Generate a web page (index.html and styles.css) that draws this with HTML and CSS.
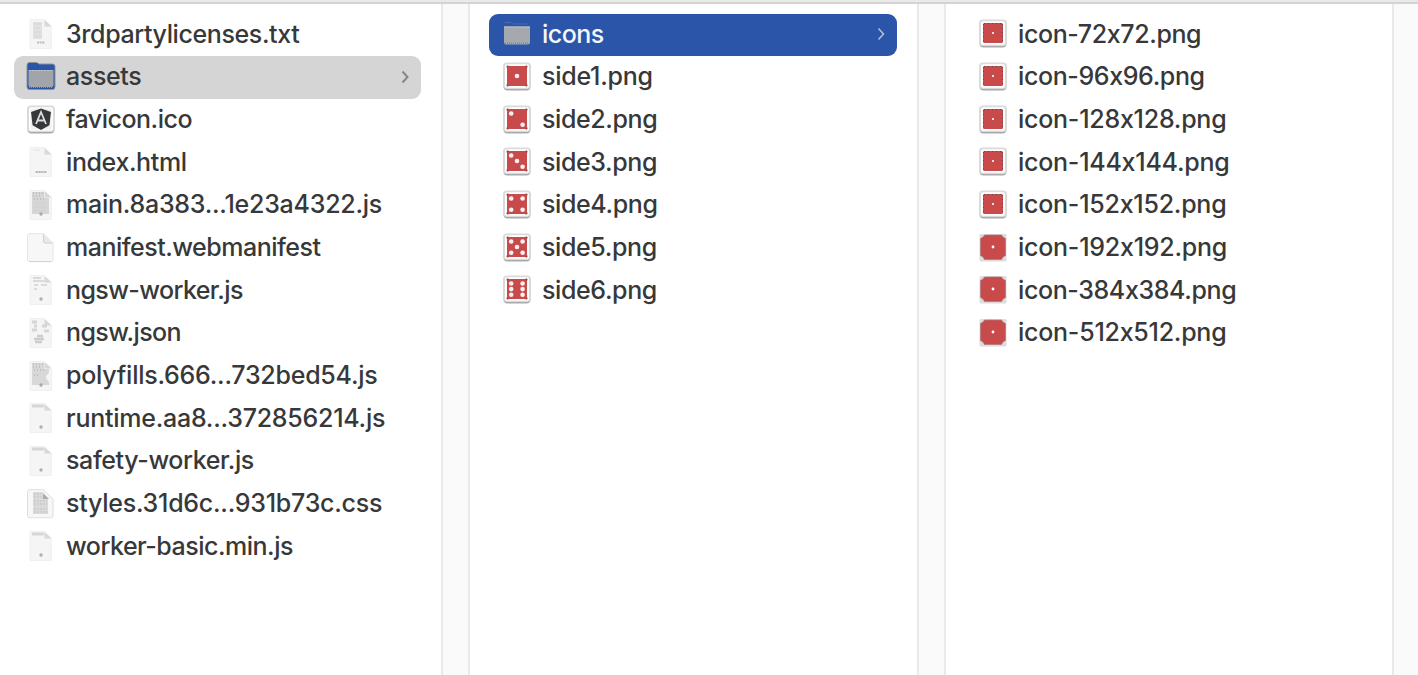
FILE: index.html
```
<!DOCTYPE html>
<html lang="en">
<head>
<meta charset="utf-8">
<title>Files</title>
<link rel="stylesheet" href="styles.css">
</head>
<body>
<svg class="sprite" aria-hidden="true">
  <symbol id="page" viewBox="0 0 30 30">
    <path d="M4 .5h14.500l7 7v22h-21.500z" fill="#f5f5f5" stroke="#f0f0f0"/>
    <path d="M18.500 1v6.500h7z" fill="#d8d8d8"/>
  </symbol>
  <symbol id="doc-txt" viewBox="0 0 30 30">
    <use href="#page"/><path d="M7 3h9v17H7z" fill="#e1e1e1"/><path d="M8 5h7M9 9h5M8 13h7M8 17h7" stroke="#d6d6d6"/><path d="M11 23.500h8" stroke="#bdbdbd" stroke-width="2" stroke-dasharray="2 .6"/>
  </symbol>
  <symbol id="doc-html" viewBox="0 0 30 30">
    <use href="#page"/><path d="M7 3h7" stroke="#e2e2e2"/><path d="M9.500 25h11" stroke="#b8b8b8" stroke-width="2" stroke-dasharray="2.300 .6"/>
  </symbol>
  <symbol id="doc-code" viewBox="0 0 30 30">
    <use href="#page"/><path d="M6 2h12v6h5v16H6z" fill="#d6d6d6"/><path d="M7 3h10M7 6h9M8 9h10" stroke="#aaa" stroke-dasharray="1 2"/><path d="M8 13h12M8 17h12M8 21h12" stroke="#cfcfcf"/><circle cx="15" cy="24" r="1.700" fill="#a8a9ad"/>
  </symbol>
  <symbol id="doc-poly" viewBox="0 0 30 30">
    <use href="#page"/><path d="M6 2h12v6h5v4l-3 3v2l3 4v3H6z" fill="#d8d8d8"/><path d="M7 3h10M7 6h9M8 9h10M8 14h6" stroke="#aaa" stroke-dasharray="1 2"/><circle cx="15" cy="24" r="1.700" fill="#a8a9ad"/>
  </symbol>
  <symbol id="doc-worker" viewBox="0 0 30 30">
    <use href="#page"/><path d="M7 3h8M7 6h11M8 10h4M15 10h6M8 14h3" stroke="#dadada" stroke-width="2"/><circle cx="15" cy="24" r="1.700" fill="#b0b0b3"/>
  </symbol>
  <symbol id="doc-json" viewBox="0 0 30 30">
    <use href="#page"/><path d="M6 4h5M8 8h3M16 8h5M6 12h5M18 13h5" stroke="#d6d6d6" stroke-width="3"/><path d="M8 21h10M11 18h6M9 24h7" stroke="#cdcdcd" stroke-width="2.500"/>
  </symbol>
  <symbol id="doc-js" viewBox="0 0 30 30">
    <use href="#page"/><path d="M6 3h12" stroke="#d6d6d6" stroke-width="3"/><circle cx="15" cy="24" r="1.700" fill="#b0b0b3"/>
  </symbol>
  <symbol id="doc-blank" viewBox="0 0 30 30">
    <path d="M4 .7h13.500l9.500 9.500v16q0 2.500-2.500 2.500H4q-2.500 0-2.500-2.500v-23Q1.500.7 4 .7z" fill="#f7f7f7" stroke="#e4e4e4"/>
    <path d="M17.500 1v7q0 2 2 2h7" fill="#e9e9e9" stroke="#cfcfcf"/><path d="M3 28.500h22" stroke="#d3d3d3"/>
  </symbol>
  <symbol id="doc-css" viewBox="0 0 30 30">
    <path d="M4 .7h13.500l9.500 9.500v16q0 2.500-2.500 2.500H4q-2.500 0-2.500-2.500v-23Q1.500.7 4 .7z" fill="#f7f7f7" stroke="#dedede"/>
    <path d="M7 3h10v7h5v15H7z" fill="#dadada"/><path d="M8 5h7M8 8h8M8 12h13M8 15h13M8 20h13M8 23h13" stroke="#c3c3c3" stroke-dasharray="2 1"/><path d="M17 4v6h6z" fill="#aaabae"/>
  </symbol>
  <symbol id="folder-blue" viewBox="0 0 30 30">
    <path d="M1 3q0-2.500 2.500-2.500h6.500q1.500 0 3 1.500h13.500q2.500 0 2.500 2.500v20.500q0 2.500-2.500 2.500h-23Q1 27.500 1 25z" fill="#2a55a9" stroke="#8c929c"/>
    <path d="M2.500 8h25v15q0 2-2 2h-21q-2 0-2-2z" fill="#a1a5aa"/><path d="M3 8.500h24" stroke="#c3c6ca" stroke-dasharray="2 1"/><path d="M3 25.500h24" stroke="#8297c0" stroke-dasharray="1 1"/>
  </symbol>
  <symbol id="folder-gray" viewBox="0 0 30 30">
    <path d="M2.500 3.500h7l2 1.500H25" fill="none" stroke="#4a6bae"/>
    <path d="M2 7.500h26v16q0 2-2 2H4q-2 0-2-2z" fill="#a5a9ad"/><path d="M2 8h26" stroke="#bcc3cf"/><path d="M3 24.500h24" stroke="#7189ba" stroke-width="2" stroke-dasharray="1 1"/>
  </symbol>
  <symbol id="frame" viewBox="0 0 30 30">
    <rect x="1.500" y="1" width="27" height="27.500" rx="4" fill="#a9aaad"/>
    <rect x="1" y=".5" width="28" height="26.500" rx="4" fill="#dadada"/>
    <rect x="3" y="2.200" width="24" height="23.500" rx="2" fill="#fff"/>
  </symbol>
  <symbol id="angular" viewBox="0 0 30 30">
    <use href="#frame"/><rect x="4.500" y="3.500" width="21" height="21" fill="#f0f0f0"/>
    <path d="M15 3.500l10 3.600-1.600 13.200L15 25l-8.400-4.700L5 7.100z" fill="#37383a"/>
    <path d="M10 19l5-12L20 19M12 15.500h6" fill="none" stroke="#ddd" stroke-width="1.800"/>
  </symbol>
  <symbol id="die" viewBox="0 0 30 30">
    <use href="#frame"/><rect x="5" y="4" width="20" height="20" fill="#c94a4b"/>
    <path d="M5 5.500V4h1.500M23.500 4H25v1.500M25 22.500V24h-1.500M6.500 24H5v-1.500" fill="none" stroke="#8a4849"/>
  </symbol>
  <symbol id="die-1" viewBox="0 0 30 30"><use href="#die"/><circle cx="15" cy="14" r="2.300" fill="#f6f0f0"/></symbol>
  <symbol id="die-2" viewBox="0 0 30 30"><use href="#die"/><g fill="#f6f0f0"><circle cx="9.200" cy="8.500" r="2.300"/><circle cx="20.600" cy="19.700" r="2.300"/></g></symbol>
  <symbol id="die-3" viewBox="0 0 30 30"><use href="#die-2"/><circle cx="15" cy="14" r="2.300" fill="#f6f0f0"/></symbol>
  <symbol id="die-4" viewBox="0 0 30 30"><use href="#die-2"/><g fill="#f6f0f0"><circle cx="20.600" cy="8.500" r="2.300"/><circle cx="9.200" cy="19.700" r="2.300"/></g></symbol>
  <symbol id="die-5" viewBox="0 0 30 30"><use href="#die-4"/><circle cx="15" cy="14" r="2.300" fill="#f6f0f0"/></symbol>
  <symbol id="die-6" viewBox="0 0 30 30"><use href="#die-4"/><g fill="#f6f0f0"><circle cx="9.200" cy="14.100" r="2.300"/><circle cx="20.600" cy="14.100" r="2.300"/></g></symbol>
  <symbol id="app" viewBox="0 0 30 30">
    <use href="#frame"/><rect x="5" y="4" width="20" height="20" rx="1.500" fill="#c94a4b"/>
    <path d="M5.500 5v18M24.500 5v18M6 4.500h18" stroke="#763b3d" stroke-dasharray="1 3"/><circle cx="15" cy="14" r="1.100" fill="#fff"/>
  </symbol>
  <symbol id="app-large" viewBox="0 0 30 30">
    <rect x="1.500" y="1" width="27" height="27.500" rx="1.500" fill="#dcdcdc"/>
    <path d="M6.500 2h17q1 2.500 4 3.500v17q-3 1-4 4h-17q-1-3-4-4v-17q3-1 4-3.500z" fill="#c94a4b" stroke="#a9797b" stroke-width=".7"/>
    <circle cx="15" cy="14" r="1.400" fill="#fff"/>
  </symbol>
</svg>
<div class="window">
  <header class="topbar"></header>
  <main class="browser">
    <ul class="column">
      <li class="row"><svg class="icon"><use href="#doc-txt"/></svg><span class="name">3rdpartylicenses.txt</span></li>
      <li class="row row-open"><svg class="icon"><use href="#folder-blue"/></svg><span class="name">assets</span><svg class="chevron" viewBox="0 0 8 14"><path d="M1.500 1.500l5 5.500-5 5.500"/></svg></li>
      <li class="row"><svg class="icon"><use href="#angular"/></svg><span class="name tight">favicon.ico</span></li>
      <li class="row"><svg class="icon"><use href="#doc-html"/></svg><span class="name">index.html</span></li>
      <li class="row"><svg class="icon"><use href="#doc-code"/></svg><span class="name loose">main.8a383...1e23a4322.js</span></li>
      <li class="row"><svg class="icon"><use href="#doc-blank"/></svg><span class="name tight">manifest.webmanifest</span></li>
      <li class="row"><svg class="icon"><use href="#doc-worker"/></svg><span class="name tighter">ngsw-worker.js</span></li>
      <li class="row"><svg class="icon"><use href="#doc-json"/></svg><span class="name tighter">ngsw.json</span></li>
      <li class="row"><svg class="icon"><use href="#doc-poly"/></svg><span class="name loose">polyfills.666...732bed54.js</span></li>
      <li class="row"><svg class="icon"><use href="#doc-js"/></svg><span class="name loose">runtime.aa8...372856214.js</span></li>
      <li class="row"><svg class="icon"><use href="#doc-js"/></svg><span class="name">safety-worker.js</span></li>
      <li class="row"><svg class="icon"><use href="#doc-css"/></svg><span class="name loose">styles.31d6c...931b73c.css</span></li>
      <li class="row"><svg class="icon"><use href="#doc-js"/></svg><span class="name tight">worker-basic.min.js</span></li>
    </ul>
    <div class="gutter"></div>
    <ul class="column">
      <li class="row row-active"><svg class="icon"><use href="#folder-gray"/></svg><span class="name tight">icons</span><svg class="chevron" viewBox="0 0 8 14"><path d="M1.500 1.500l5 5.500-5 5.500"/></svg></li>
      <li class="row"><svg class="icon"><use href="#die-1"/></svg><span class="name loose">side1.png</span></li>
      <li class="row"><svg class="icon"><use href="#die-2"/></svg><span class="name">side2.png</span></li>
      <li class="row"><svg class="icon"><use href="#die-3"/></svg><span class="name">side3.png</span></li>
      <li class="row"><svg class="icon"><use href="#die-4"/></svg><span class="name">side4.png</span></li>
      <li class="row"><svg class="icon"><use href="#die-5"/></svg><span class="name">side5.png</span></li>
      <li class="row"><svg class="icon"><use href="#die-6"/></svg><span class="name">side6.png</span></li>
    </ul>
    <div class="gutter"></div>
    <ul class="column">
      <li class="row"><svg class="icon"><use href="#app"/></svg><span class="name">icon-72x72.png</span></li>
      <li class="row"><svg class="icon"><use href="#app"/></svg><span class="name">icon-96x96.png</span></li>
      <li class="row"><svg class="icon"><use href="#app"/></svg><span class="name loose">icon-128x128.png</span></li>
      <li class="row"><svg class="icon"><use href="#app"/></svg><span class="name loose">icon-144x144.png</span></li>
      <li class="row"><svg class="icon"><use href="#app"/></svg><span class="name loose">icon-152x152.png</span></li>
      <li class="row"><svg class="icon"><use href="#app-large"/></svg><span class="name loose">icon-192x192.png</span></li>
      <li class="row"><svg class="icon"><use href="#app-large"/></svg><span class="name">icon-384x384.png</span></li>
      <li class="row"><svg class="icon"><use href="#app-large"/></svg><span class="name loose">icon-512x512.png</span></li>
    </ul>
    <div class="gutter"></div>
  </main>
</div>
</body>
</html>
```
FILE: styles.css
```
* { box-sizing: border-box; }
body { margin: 0; background: #fff; }
.sprite { display: none; }
.window {
  width: 1418px;
  height: 675px;
  display: flex;
  flex-direction: column;
  overflow: hidden;
  font: 530 25px/30px Inter, "Liberation Sans", sans-serif;
  font-feature-settings: "calt" 0;
  color: #37383a;
}
.topbar {
  flex: none;
  height: 4px;
  background: #e9e9e9;
  border-bottom: 2px solid #d4d4d4;
}
.browser {
  flex: 1;
  display: grid;
  grid-template-columns: 441px 29px 447px 29px 446px 26px;
}
.column {
  list-style: none;
  margin: 0;
  padding: 9.500px 20px 0 19px;
}
.column:first-child { padding-left: 14px; }
.gutter {
  background: #fafafa;
  border: solid #e9e9e9;
  border-width: 0 2px;
}
.gutter:last-child { border-right: 0; }
.row {
  display: flex;
  align-items: center;
  height: 42.670px;
  padding: 0 12px 1px 13px;
  border-radius: 9px;
}
.column:first-child .row { padding-left: 12px; }
.icon {
  flex: none;
  width: 30px;
  height: 30px;
  margin-right: 10px;
}
.name {
  flex: 1;
  white-space: nowrap;
  padding-bottom: 1px;
  letter-spacing: -.39px;
}
.loose { letter-spacing: -.250px; }
.tight { letter-spacing: -.5px; }
.tighter { letter-spacing: -.6px; }
.chevron {
  width: 8px;
  height: 14px;
  fill: none;
  stroke: #85868a;
  stroke-width: 2;
}
.row-open { background: #d5d5d5; }
.row-active { background: #2a55a9; color: #f5f6f8; }
.row-active .chevron { stroke: #b9c1cf; stroke-width: 1.500; }
```
